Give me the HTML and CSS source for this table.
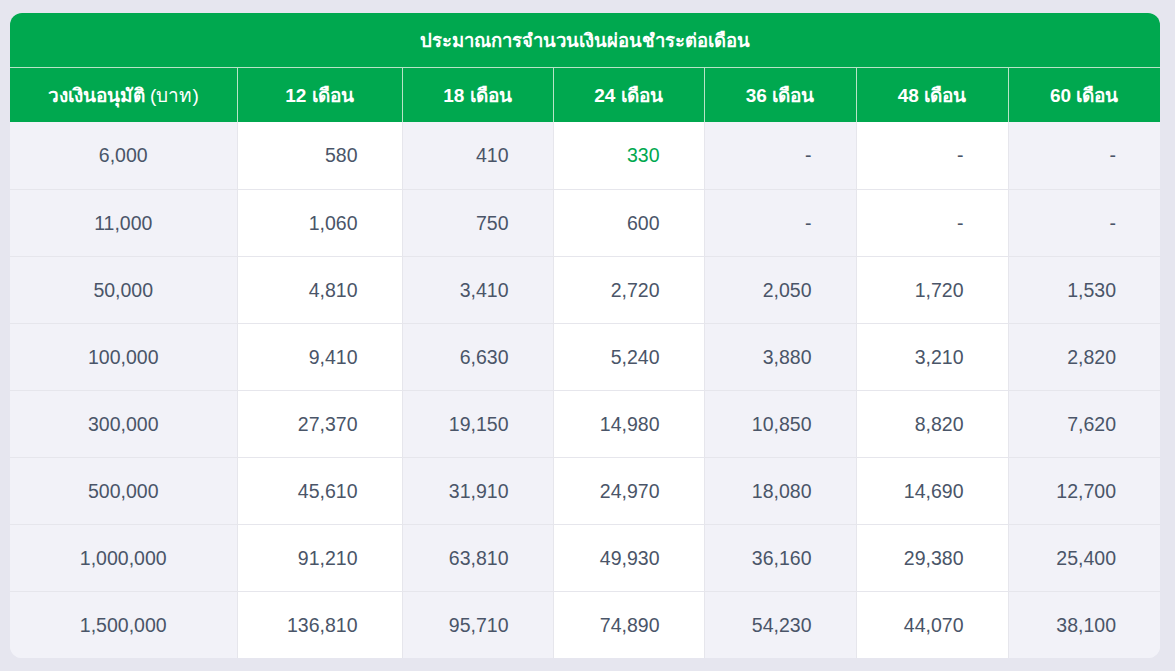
FILE: index.html
```html
<!DOCTYPE html>
<html lang="th">
<head>
<meta charset="utf-8">
<title>ประมาณการจำนวนเงินผ่อนชำระต่อเดือน</title>
<link rel="stylesheet" href="styles.css">
</head>
<body>
<div class="card">
  <table class="rates">
    <colgroup>
      <col class="c-amount">
      <col class="c-narrow">
      <col class="c-mid">
      <col class="c-mid">
      <col class="c-wide">
      <col class="c-wide">
      <col class="c-wide">
    </colgroup>
    <thead>
      <tr class="title-row"><th colspan="7">ประมาณการจำนวนเงินผ่อนชำระต่อเดือน</th></tr>
      <tr class="head-row">
        <th>วงเงินอนุมัติ <span class="unit">(บาท)</span></th>
        <th>12 เดือน</th>
        <th>18 เดือน</th>
        <th>24 เดือน</th>
        <th>36 เดือน</th>
        <th>48 เดือน</th>
        <th>60 เดือน</th>
      </tr>
    </thead>
    <tbody>
      <tr><td>6,000</td><td>580</td><td>410</td><td class="hl">330</td><td>-</td><td>-</td><td>-</td></tr>
      <tr><td>11,000</td><td>1,060</td><td>750</td><td>600</td><td>-</td><td>-</td><td>-</td></tr>
      <tr><td>50,000</td><td>4,810</td><td>3,410</td><td>2,720</td><td>2,050</td><td>1,720</td><td>1,530</td></tr>
      <tr><td>100,000</td><td>9,410</td><td>6,630</td><td>5,240</td><td>3,880</td><td>3,210</td><td>2,820</td></tr>
      <tr><td>300,000</td><td>27,370</td><td>19,150</td><td>14,980</td><td>10,850</td><td>8,820</td><td>7,620</td></tr>
      <tr><td>500,000</td><td>45,610</td><td>31,910</td><td>24,970</td><td>18,080</td><td>14,690</td><td>12,700</td></tr>
      <tr><td>1,000,000</td><td>91,210</td><td>63,810</td><td>49,930</td><td>36,160</td><td>29,380</td><td>25,400</td></tr>
      <tr><td>1,500,000</td><td>136,810</td><td>95,710</td><td>74,890</td><td>54,230</td><td>44,070</td><td>38,100</td></tr>
    </tbody>
  </table>
</div>
</body>
</html>
```
FILE: styles.css
```css
html, body {
  margin: 0;
  padding: 0;
  background: #e6e6ef;
}
body {
  padding: 13px 15px 13px 10px;
  font-family: "Liberation Sans", Arial, sans-serif;
}
.card {
  width: 1150px;
  border-radius: 12px;
  overflow: hidden;
  background: #f2f2f8;
}
.rates {
  width: 1150px;
  border-collapse: collapse;
  table-layout: fixed;
}
.c-amount { width: 227px; }
.c-narrow { width: 165px; }
.c-mid { width: 151px; }
.c-wide { width: 152px; }

.rates th {
  background: #00a84f;
  color: #ffffff;
  font-weight: 700;
  text-align: center;
  padding: 0;
}
.title-row th {
  height: 54px;
  font-size: 18.5px;
  border-bottom: 1px solid #b9e3c7;
}
.head-row th {
  height: 54px;
  font-size: 19px;
  border-left: 1px solid #b9e3c7;
}
.head-row th:first-child { border-left: none; }
.unit { font-weight: 400; }

.rates td {
  height: 66px;
  padding: 0 44px 0 0;
  font-size: 19.5px;
  color: #4a5568;
  text-align: right;
  border-left: 1px solid #e6e6ec;
  border-top: 1px solid #e6e6ec;
  background: #f2f2f8;
}
.rates tbody tr:first-child td {
  border-top: none;
  height: 67px;
}
.rates td:first-child {
  text-align: center;
  padding: 0;
  border-left: none;
}
.rates td:nth-child(2n) { background: #ffffff; }
.rates td.hl { color: #00a84f; }
```
